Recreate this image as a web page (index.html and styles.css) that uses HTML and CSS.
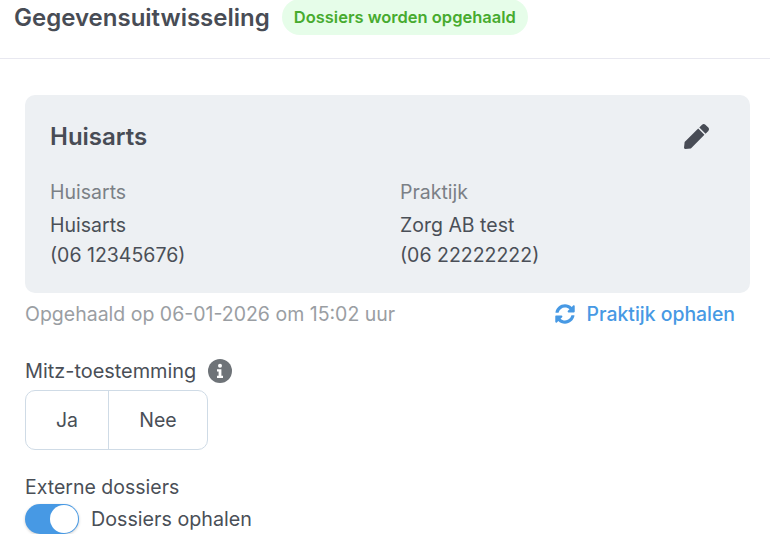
FILE: index.html
```html
<!DOCTYPE html>
<html lang="nl">
<head>
    <meta charset="UTF-8">
    <meta name="viewport" content="width=device-width, initial-scale=1.0">
    <title>Gegevensuitwisseling</title>
    <link rel="stylesheet" href="styles.css">
</head>
<body>
    <header class="page-header">
        <h1>Gegevensuitwisseling</h1>
        <span class="badge">Dossiers worden opgehaald</span>
    </header>

    <main class="content">
        <section class="card">
            <div class="card-head">
                <h2>Huisarts</h2>
                <svg class="edit-icon" viewBox="0 0 512 512" aria-hidden="true">
                    <path fill="currentColor" d="M290.74 93.24l128.02 128.02-277.99 277.99-114.14 12.6C11.35 513.54-1.56 500.62.14 485.34l12.7-114.22 277.9-277.88zm207.2-19.06l-60.11-60.11c-18.75-18.75-49.16-18.75-67.91 0l-56.55 56.55 128.02 128.02 56.55-56.55c18.75-18.76 18.75-49.16 0-67.91z"/>
                </svg>
            </div>
            <div class="card-cols">
                <div class="col">
                    <div class="col-label">Huisarts</div>
                    <div>Huisarts</div>
                    <div>(06 12345676)</div>
                </div>
                <div class="col">
                    <div class="col-label">Praktijk</div>
                    <div>Zorg AB test</div>
                    <div>(06 22222222)</div>
                </div>
            </div>
        </section>

        <div class="fetch-row">
            <span class="fetch-date">Opgehaald op 06-01-2026 om 15:02 uur</span>
            <a class="fetch-link" href="#">
                <svg class="sync-icon" viewBox="0 0 512 512" aria-hidden="true">
                    <path fill="currentColor" d="M370.72 133.28C339.46 104.02 298.87 87.98 255.85 88c-77.42.07-144.25 53.15-162.7 126.85-1.34 5.37-6.12 9.15-11.65 9.15H24.1c-7.51 0-13.22-6.82-11.83-14.2C33.94 95.46 134.2 8 256 8c66.78 0 127.42 26.27 172.2 69.04L464 41.24C479.12 26.12 505 36.83 505 58.2V192c0 13.25-10.75 24-24 24H347.2c-21.38 0-32.09-25.85-16.97-40.97l40.49-41.75zM32 296h133.8c21.38 0 32.09 25.85 16.97 40.97l-41.67 41.67c31.26 29.27 71.86 45.32 114.88 45.28 77.38-.07 144.23-53.11 162.7-126.85 1.34-5.37 6.12-9.15 11.65-9.15h57.4c7.51 0 13.22 6.82 11.83 14.2C478.06 416.54 377.8 504 256 504c-66.78 0-127.42-26.27-172.2-69.04L48 470.76C32.88 485.88 7 475.17 7 453.8V320c0-13.25 10.75-24 24-24z"/>
                </svg>
                Praktijk ophalen
            </a>
        </div>

        <div class="field-label mitz">
            Mitz-toestemming
            <svg class="info-icon" viewBox="0 0 24 24" aria-hidden="true">
                <circle cx="12" cy="12" r="12" fill="currentColor"/>
                <circle cx="12" cy="6.8" r="2" fill="#fff"/>
                <path fill="#fff" d="M9 10.2h4.4v6.6H15v2.2H9v-2.2h1.6v-4.4H9z"/>
            </svg>
        </div>
        <div class="btn-group">
            <button class="btn-ja">Ja</button>
            <button class="btn-nee">Nee</button>
        </div>

        <div class="field-label external">Externe dossiers</div>
        <div class="toggle-row">
            <span class="toggle"><span class="knob"></span></span>
            <span>Dossiers ophalen</span>
        </div>
    </main>
</body>
</html>
```

FILE: styles.css
```css
body {
    margin: 0;
    font-family: Inter, "Noto Sans", sans-serif;
    background: #fff;
    color: #4a4f57;
    font-size: 19.5px;
    overflow: hidden;
}

.page-header {
    display: flex;
    align-items: flex-start;
    gap: 12px;
    height: 58px;
    padding: 0 14px;
    border-bottom: 1px solid #e8e8f0;
}

.page-header h1 {
    margin: 0;
    font-size: 24px;
    line-height: 35px;
    font-weight: 600;
    color: #484c55;
}

.badge {
    margin-top: -1px;
    padding: 0 12px;
    height: 36px;
    line-height: 36px;
    border-radius: 18px;
    background: #e6fde9;
    color: #47ab2f;
    font-size: 16.5px;
    font-weight: 600;
}

.content {
    padding: 36px 20px 0 25px;
}

.card {
    height: 198px;
    padding: 0 25px;
    border-radius: 10px;
    background: #edf0f3;
}

.card-head {
    display: flex;
    justify-content: space-between;
    align-items: center;
    padding: 28px 16px 0 0;
}

.card-head h2 {
    margin: 0;
    font-size: 24px;
    line-height: 27px;
    font-weight: 600;
    color: #484c55;
}

.edit-icon {
    width: 25px;
    height: 25px;
    color: #484c55;
}

.card-cols {
    display: grid;
    grid-template-columns: 350px 1fr;
    margin-top: 27px;
}

.col {
    line-height: 30px;
}

.col-label {
    color: #7b8086;
    margin-bottom: 3px;
}

.fetch-row {
    display: flex;
    justify-content: space-between;
    align-items: center;
    margin-top: 9px;
    margin-right: 15px;
    height: 24px;
}

.fetch-date {
    color: #9a9ea3;
}

.fetch-link {
    display: flex;
    align-items: center;
    gap: 12px;
    color: #4799e4;
    font-size: 19.4px;
    font-weight: 500;
    text-decoration: none;
}

.sync-icon {
    width: 20px;
    height: 20px;
}

.field-label {
    display: flex;
    align-items: center;
    gap: 12px;
    margin-top: 33px;
    height: 24px;
    color: #4a4f57;
}

.field-label.mitz {
    font-size: 19.9px;
}

.info-icon {
    width: 24px;
    height: 24px;
    color: #6e7378;
}

.btn-group {
    display: inline-flex;
    margin-top: 7px;
    height: 60px;
    border: 1px solid #cfdbe6;
    border-radius: 10px;
    box-sizing: border-box;
    background: #fff;
}

.btn-group button {
    border: 0;
    background: none;
    padding: 0;
    font: inherit;
    color: #4a4f57;
}

.btn-group .btn-ja {
    width: 83px;
    border-right: 1px solid #cfdbe6;
}

.btn-nee {
    width: 98px;
}

.field-label.external {
    margin-top: 25px;
}

.toggle-row {
    display: flex;
    align-items: center;
    gap: 12px;
    margin-top: 5px;
    font-size: 19.7px;
}

.toggle {
    display: block;
    position: relative;
    width: 54px;
    height: 30px;
    border-radius: 15px;
    background: #4799e4;
    box-shadow: 0 1px 3px rgba(0, 0, 0, 0.2);
}

.knob {
    position: absolute;
    right: 1px;
    top: 1px;
    width: 28px;
    height: 28px;
    border-radius: 50%;
    background: #fff;
}
```
